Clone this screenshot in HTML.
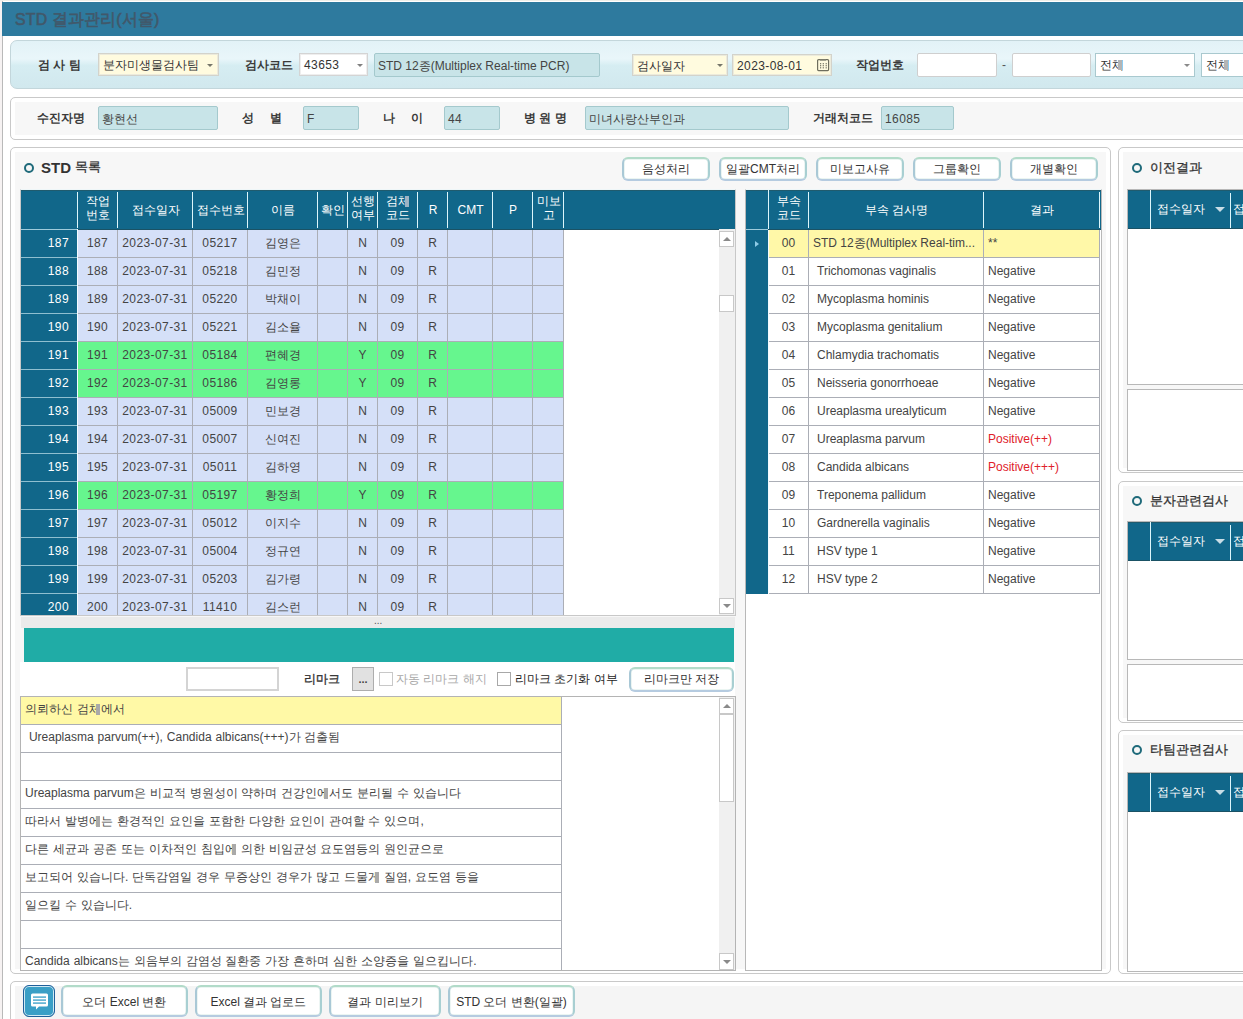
<!DOCTYPE html><html><head><meta charset="utf-8"><style>
*{margin:0;padding:0;box-sizing:border-box}
html,body{width:1243px;height:1019px;overflow:hidden;background:#fff}
body{position:relative;font-family:"Liberation Sans",sans-serif;font-size:12px;color:#444}
.a{position:absolute}
.t{position:absolute;white-space:nowrap;line-height:14px}
.hd{position:absolute;background:#11678a;border-top:1px solid #205b6e;border-bottom:1px solid #1a5265}
.hc{position:absolute;color:#fff;text-align:center;line-height:14px;white-space:nowrap}
.vl{position:absolute;width:1px;background:#dcf6fb}
.cell{position:absolute;text-align:center;white-space:nowrap;line-height:14px}
.btn{position:absolute;border-radius:6px;border:2px solid;border-color:#b2dbc9 #a8cfd2 #b5cbe0 #a9c8d6;background:#fff;text-align:center;color:#333;box-shadow:inset 0 0 0 0.5px #d8ebe6}
.lbl{position:absolute;font-weight:bold;color:#3a3a3a;white-space:nowrap;line-height:14px}
.fld{position:absolute;background:#c8e4e8;border:1px solid #a4c9cd;border-radius:2px;color:#444;line-height:21px;padding-top:1.5px;padding-left:3px;white-space:nowrap}
.cmb{position:absolute;background:#fffbdf;border:1px solid #d3d3cb;box-shadow:inset 0 0 0 1px #ecebdc;color:#333;line-height:21px;padding-top:1px;padding-left:4px;white-space:nowrap}
.arr{position:absolute;width:0;height:0;border-left:4px solid transparent;border-right:4px solid transparent;border-top:4px solid #888}
.e{position:relative}
.e::after{content:'';position:absolute;left:7px;top:2px;width:4px;height:11px;background:#a9a9a9}
.eh::after{background:#9fb4c4}
.panel{position:absolute;border:1px solid #c9c9c9;border-radius:5px;background:#f7f7f7;box-shadow:inset 0 0 0 4px #fff}
.circ{position:absolute;width:10px;height:10px;border:2.8px solid #1f6a7a;border-radius:50%}
.ptitle{position:absolute;font-weight:normal;-webkit-text-stroke:0.3px #333;font-size:13px;color:#333;white-space:nowrap;line-height:16px}
</style></head><body>
<div class="a" style="left:0;top:0;width:1243px;height:1019px;background:#f6f2f2"></div>
<div class="a" style="left:2px;top:0;width:1241px;height:1019px;background:#fff;border-left:1px solid #b9b9b9"></div>
<div class="a" style="left:0;top:0;width:1243px;height:1px;background:#eeeee8"></div>
<div class="a" style="left:2px;top:2px;width:1241px;height:34px;background:#2e7a9e"></div>
<div class="t" style="left:15px;top:11px;font-size:17px;line-height:18px;font-weight:normal;-webkit-text-stroke:0.6px #41586a;color:#41586a;letter-spacing:0.2px;transform:scaleX(0.935);transform-origin:0 0">STD 결과관리(서울)</div>
<div class="a" style="left:10px;top:40px;width:1300px;height:49px;border:1px solid #c3d6db;border-radius:7px;background:linear-gradient(#e2f2f7 0%,#e9f6fa 38%,#d6edf2 52%,#d1e8ee 100%)"></div>
<div class="lbl" style="left:38px;top:58px">검 사 팀</div>
<div class="cmb" style="left:98px;top:53px;width:121px;height:23px">분자미생물검사팀</div><div class="arr" style="left:207px;top:64px;border-width:3px 3px 0 3px;border-top-color:#76766a"></div>
<div class="lbl" style="left:245px;top:58px">검사코드</div>
<div class="cmb" style="left:299px;top:53px;width:69px;height:23px;background:#fff;border-color:#d4d4d4;box-shadow:inset 0 0 0 1px #eee;letter-spacing:0.4px">43653</div><div class="arr" style="left:357px;top:64px;border-width:3px 3px 0 3px;border-top-color:#808080"></div>
<div class="fld" style="left:374px;top:53px;width:226px;height:24px">STD 12종(Multiplex Real-time PCR)</div>
<div class="cmb" style="left:632px;top:54px;width:96px;height:22px">검사일자</div><div class="arr" style="left:717px;top:64px;border-width:3px 3px 0 3px;border-top-color:#76766a"></div>
<div class="cmb" style="left:732px;top:54px;width:100px;height:22px;letter-spacing:0.4px">2023-08-01</div>
<svg class="a" style="left:817px;top:59px" width="13" height="13" viewBox="0 0 13 13"><rect x="0.6" y="0.6" width="11" height="11" rx="1" fill="none" stroke="#6e6e5e" stroke-width="1.2"/><rect x="3" y="0.5" width="6" height="1.2" fill="#8a8a7a"/><rect x="3.0" y="4.1" width="1.2" height="1.2" fill="#707060"/><rect x="3.0" y="6.1" width="1.2" height="1.2" fill="#707060"/><rect x="3.0" y="8.2" width="1.2" height="1.2" fill="#707060"/><rect x="5.7" y="4.1" width="1.2" height="1.2" fill="#707060"/><rect x="5.7" y="6.1" width="1.2" height="1.2" fill="#707060"/><rect x="5.7" y="8.2" width="1.2" height="1.2" fill="#707060"/><rect x="8.6" y="4.1" width="1.2" height="1.2" fill="#707060"/><rect x="8.6" y="6.1" width="1.2" height="1.2" fill="#707060"/><rect x="8.6" y="8.2" width="1.2" height="1.2" fill="#707060"/></svg>
<div class="lbl" style="left:856px;top:58px">작업번호</div>
<div class="a" style="left:917px;top:53px;width:80px;height:24px;background:#fff;border:1px solid #cfcfcf;border-radius:2px"></div>
<div class="t" style="left:1002px;top:58px;color:#555">-</div>
<div class="a" style="left:1012px;top:53px;width:79px;height:24px;background:#fff;border:1px solid #cfcfcf;border-radius:2px"></div>
<div class="cmb" style="left:1095px;top:53px;width:100px;height:24px;background:#fff;border-color:#a9c9cf;box-shadow:none">전체</div><div class="arr" style="left:1184px;top:64px;border-width:3px 3px 0 3px;border-top-color:#8a8a8a"></div>
<div class="cmb" style="left:1201px;top:53px;width:100px;height:24px;background:#fff;border-color:#a9c9cf;box-shadow:none">전체</div>
<div class="a" style="left:1118px;top:60px;width:4px;height:10px;background:#b4b4b4"></div>
<div class="a" style="left:1224px;top:60px;width:4px;height:10px;background:#b4b4b4"></div>
<div class="panel" style="left:10px;top:97px;width:1300px;height:43px"></div>
<div class="lbl" style="left:37px;top:111px">수진자명</div>
<div class="fld" style="left:98px;top:106px;width:120px;height:24px">황현선</div>
<div class="lbl" style="left:242px;top:111px">성</div><div class="lbl" style="left:270px;top:111px">별</div>
<div class="fld" style="left:303px;top:106px;width:56px;height:24px">F</div>
<div class="lbl" style="left:383px;top:111px">나</div><div class="lbl" style="left:411px;top:111px">이</div>
<div class="fld" style="left:444px;top:106px;width:56px;height:24px;letter-spacing:0.4px">44</div>
<div class="lbl" style="left:524px;top:111px">병 원 명</div>
<div class="fld" style="left:585px;top:106px;width:204px;height:24px">미녀사랑산부인과</div>
<div class="lbl" style="left:813px;top:111px">거래처코드</div>
<div class="fld" style="left:881px;top:106px;width:73px;height:24px;letter-spacing:0.4px">16085</div>
<div class="panel" style="left:10px;top:147px;width:1101px;height:827px"></div>
<div class="circ" style="left:24px;top:163px"></div>
<div class="ptitle" style="left:41px;top:160px;font-size:15px;font-weight:bold;-webkit-text-stroke:0">STD</div><div class="ptitle" style="left:75px;top:159px">목록</div>
<div class="btn" style="left:622px;top:157px;width:88px;height:24px;line-height:20px">음성처리</div>
<div class="btn" style="left:719px;top:157px;width:88px;height:24px;line-height:20px">일괄CMT처리</div>
<div class="btn" style="left:816px;top:157px;width:88px;height:24px;line-height:20px">미보고사유</div>
<div class="btn" style="left:913px;top:157px;width:88px;height:24px;line-height:20px">그룹확인</div>
<div class="btn" style="left:1010px;top:157px;width:88px;height:24px;line-height:20px">개별확인</div>
<div class="a" style="left:20px;top:189px;width:716px;height:427px;background:#fff;border:1px solid #c8c8c8;border-top-color:#eef6f8"></div>
<div class="hd" style="left:21px;top:190px;width:714px;height:40px"></div>
<div class="hc" style="left:78px;top:194px;width:40px">작업<br>번호</div>
<div class="hc" style="left:118px;top:203px;width:75px">접수일자</div>
<div class="hc" style="left:193px;top:203px;width:55px">접수번호</div>
<div class="hc" style="left:248px;top:203px;width:70px">이름</div>
<div class="hc" style="left:318px;top:203px;width:30px">확인</div>
<div class="hc" style="left:348px;top:194px;width:30px">선행<br>여부</div>
<div class="hc" style="left:378px;top:194px;width:40px">검<span class="e eh">체</span><br>코드</div>
<div class="hc" style="left:418px;top:203px;width:30px">R</div>
<div class="hc" style="left:448px;top:203px;width:45px">CMT</div>
<div class="hc" style="left:493px;top:203px;width:40px">P</div>
<div class="hc" style="left:533px;top:194px;width:31px">미보<br>고</div>
<div class="vl" style="left:77px;top:192px;height:36px"></div>
<div class="vl" style="left:117px;top:192px;height:36px"></div>
<div class="vl" style="left:192px;top:192px;height:36px"></div>
<div class="vl" style="left:247px;top:192px;height:36px"></div>
<div class="vl" style="left:317px;top:192px;height:36px"></div>
<div class="vl" style="left:347px;top:192px;height:36px"></div>
<div class="vl" style="left:377px;top:192px;height:36px"></div>
<div class="vl" style="left:417px;top:192px;height:36px"></div>
<div class="vl" style="left:447px;top:192px;height:36px"></div>
<div class="vl" style="left:492px;top:192px;height:36px"></div>
<div class="vl" style="left:532px;top:192px;height:36px"></div>
<div class="vl" style="left:563px;top:192px;height:36px"></div>
<div class="a" style="left:21px;top:229px;width:698px;height:386px;overflow:hidden;z-index:1">
<div class="a" style="left:0;top:0;width:56px;height:1px;background:#9fcbdb"></div>
<div class="a" style="left:56px;top:0;width:1px;height:386px;background:#f4fbff"></div>
<div class="a" style="left:0;top:1px;width:56px;height:28px;background:#11678a;border-bottom:1px solid #8fbfd0"></div>
<div class="t" style="left:0;top:7px;width:48px;text-align:right;color:#fff;letter-spacing:0.4px">187</div>
<div class="a" style="left:57px;top:1px;width:40px;height:28px;background:#d5e0f8;border-right:1px solid #abaeb6;border-bottom:1px solid #abaeb6"></div>
<div class="cell" style="left:57px;top:7px;width:39px;letter-spacing:0.4px;">187</div>
<div class="a" style="left:97px;top:1px;width:75px;height:28px;background:#d5e0f8;border-right:1px solid #abaeb6;border-bottom:1px solid #abaeb6"></div>
<div class="cell" style="left:97px;top:7px;width:74px;letter-spacing:0.4px;">2023-07-31</div>
<div class="a" style="left:172px;top:1px;width:55px;height:28px;background:#d5e0f8;border-right:1px solid #abaeb6;border-bottom:1px solid #abaeb6"></div>
<div class="cell" style="left:172px;top:7px;width:54px;letter-spacing:0.4px;">05217</div>
<div class="a" style="left:227px;top:1px;width:70px;height:28px;background:#d5e0f8;border-right:1px solid #abaeb6;border-bottom:1px solid #abaeb6"></div>
<div class="cell" style="left:227px;top:7px;width:69px;">김영은</div>
<div class="a" style="left:297px;top:1px;width:30px;height:28px;background:#d5e0f8;border-right:1px solid #abaeb6;border-bottom:1px solid #abaeb6"></div>
<div class="a" style="left:327px;top:1px;width:30px;height:28px;background:#d5e0f8;border-right:1px solid #abaeb6;border-bottom:1px solid #abaeb6"></div>
<div class="cell" style="left:327px;top:7px;width:29px;">N</div>
<div class="a" style="left:357px;top:1px;width:40px;height:28px;background:#d5e0f8;border-right:1px solid #abaeb6;border-bottom:1px solid #abaeb6"></div>
<div class="cell" style="left:357px;top:7px;width:39px;letter-spacing:0.4px;">09</div>
<div class="a" style="left:397px;top:1px;width:30px;height:28px;background:#d5e0f8;border-right:1px solid #abaeb6;border-bottom:1px solid #abaeb6"></div>
<div class="cell" style="left:397px;top:7px;width:29px;">R</div>
<div class="a" style="left:427px;top:1px;width:45px;height:28px;background:#d5e0f8;border-right:1px solid #abaeb6;border-bottom:1px solid #abaeb6"></div>
<div class="a" style="left:472px;top:1px;width:40px;height:28px;background:#d5e0f8;border-right:1px solid #abaeb6;border-bottom:1px solid #abaeb6"></div>
<div class="a" style="left:512px;top:1px;width:31px;height:28px;background:#d5e0f8;border-right:1px solid #abaeb6;border-bottom:1px solid #abaeb6"></div>
<div class="a" style="left:0;top:29px;width:56px;height:28px;background:#11678a;border-bottom:1px solid #8fbfd0"></div>
<div class="t" style="left:0;top:35px;width:48px;text-align:right;color:#fff;letter-spacing:0.4px">188</div>
<div class="a" style="left:57px;top:29px;width:40px;height:28px;background:#d5e0f8;border-right:1px solid #abaeb6;border-bottom:1px solid #abaeb6"></div>
<div class="cell" style="left:57px;top:35px;width:39px;letter-spacing:0.4px;">188</div>
<div class="a" style="left:97px;top:29px;width:75px;height:28px;background:#d5e0f8;border-right:1px solid #abaeb6;border-bottom:1px solid #abaeb6"></div>
<div class="cell" style="left:97px;top:35px;width:74px;letter-spacing:0.4px;">2023-07-31</div>
<div class="a" style="left:172px;top:29px;width:55px;height:28px;background:#d5e0f8;border-right:1px solid #abaeb6;border-bottom:1px solid #abaeb6"></div>
<div class="cell" style="left:172px;top:35px;width:54px;letter-spacing:0.4px;">05218</div>
<div class="a" style="left:227px;top:29px;width:70px;height:28px;background:#d5e0f8;border-right:1px solid #abaeb6;border-bottom:1px solid #abaeb6"></div>
<div class="cell" style="left:227px;top:35px;width:69px;">김민정</div>
<div class="a" style="left:297px;top:29px;width:30px;height:28px;background:#d5e0f8;border-right:1px solid #abaeb6;border-bottom:1px solid #abaeb6"></div>
<div class="a" style="left:327px;top:29px;width:30px;height:28px;background:#d5e0f8;border-right:1px solid #abaeb6;border-bottom:1px solid #abaeb6"></div>
<div class="cell" style="left:327px;top:35px;width:29px;">N</div>
<div class="a" style="left:357px;top:29px;width:40px;height:28px;background:#d5e0f8;border-right:1px solid #abaeb6;border-bottom:1px solid #abaeb6"></div>
<div class="cell" style="left:357px;top:35px;width:39px;letter-spacing:0.4px;">09</div>
<div class="a" style="left:397px;top:29px;width:30px;height:28px;background:#d5e0f8;border-right:1px solid #abaeb6;border-bottom:1px solid #abaeb6"></div>
<div class="cell" style="left:397px;top:35px;width:29px;">R</div>
<div class="a" style="left:427px;top:29px;width:45px;height:28px;background:#d5e0f8;border-right:1px solid #abaeb6;border-bottom:1px solid #abaeb6"></div>
<div class="a" style="left:472px;top:29px;width:40px;height:28px;background:#d5e0f8;border-right:1px solid #abaeb6;border-bottom:1px solid #abaeb6"></div>
<div class="a" style="left:512px;top:29px;width:31px;height:28px;background:#d5e0f8;border-right:1px solid #abaeb6;border-bottom:1px solid #abaeb6"></div>
<div class="a" style="left:0;top:57px;width:56px;height:28px;background:#11678a;border-bottom:1px solid #8fbfd0"></div>
<div class="t" style="left:0;top:63px;width:48px;text-align:right;color:#fff;letter-spacing:0.4px">189</div>
<div class="a" style="left:57px;top:57px;width:40px;height:28px;background:#d5e0f8;border-right:1px solid #abaeb6;border-bottom:1px solid #abaeb6"></div>
<div class="cell" style="left:57px;top:63px;width:39px;letter-spacing:0.4px;">189</div>
<div class="a" style="left:97px;top:57px;width:75px;height:28px;background:#d5e0f8;border-right:1px solid #abaeb6;border-bottom:1px solid #abaeb6"></div>
<div class="cell" style="left:97px;top:63px;width:74px;letter-spacing:0.4px;">2023-07-31</div>
<div class="a" style="left:172px;top:57px;width:55px;height:28px;background:#d5e0f8;border-right:1px solid #abaeb6;border-bottom:1px solid #abaeb6"></div>
<div class="cell" style="left:172px;top:63px;width:54px;letter-spacing:0.4px;">05220</div>
<div class="a" style="left:227px;top:57px;width:70px;height:28px;background:#d5e0f8;border-right:1px solid #abaeb6;border-bottom:1px solid #abaeb6"></div>
<div class="cell" style="left:227px;top:63px;width:69px;">박채이</div>
<div class="a" style="left:297px;top:57px;width:30px;height:28px;background:#d5e0f8;border-right:1px solid #abaeb6;border-bottom:1px solid #abaeb6"></div>
<div class="a" style="left:327px;top:57px;width:30px;height:28px;background:#d5e0f8;border-right:1px solid #abaeb6;border-bottom:1px solid #abaeb6"></div>
<div class="cell" style="left:327px;top:63px;width:29px;">N</div>
<div class="a" style="left:357px;top:57px;width:40px;height:28px;background:#d5e0f8;border-right:1px solid #abaeb6;border-bottom:1px solid #abaeb6"></div>
<div class="cell" style="left:357px;top:63px;width:39px;letter-spacing:0.4px;">09</div>
<div class="a" style="left:397px;top:57px;width:30px;height:28px;background:#d5e0f8;border-right:1px solid #abaeb6;border-bottom:1px solid #abaeb6"></div>
<div class="cell" style="left:397px;top:63px;width:29px;">R</div>
<div class="a" style="left:427px;top:57px;width:45px;height:28px;background:#d5e0f8;border-right:1px solid #abaeb6;border-bottom:1px solid #abaeb6"></div>
<div class="a" style="left:472px;top:57px;width:40px;height:28px;background:#d5e0f8;border-right:1px solid #abaeb6;border-bottom:1px solid #abaeb6"></div>
<div class="a" style="left:512px;top:57px;width:31px;height:28px;background:#d5e0f8;border-right:1px solid #abaeb6;border-bottom:1px solid #abaeb6"></div>
<div class="a" style="left:0;top:85px;width:56px;height:28px;background:#11678a;border-bottom:1px solid #8fbfd0"></div>
<div class="t" style="left:0;top:91px;width:48px;text-align:right;color:#fff;letter-spacing:0.4px">190</div>
<div class="a" style="left:57px;top:85px;width:40px;height:28px;background:#d5e0f8;border-right:1px solid #abaeb6;border-bottom:1px solid #abaeb6"></div>
<div class="cell" style="left:57px;top:91px;width:39px;letter-spacing:0.4px;">190</div>
<div class="a" style="left:97px;top:85px;width:75px;height:28px;background:#d5e0f8;border-right:1px solid #abaeb6;border-bottom:1px solid #abaeb6"></div>
<div class="cell" style="left:97px;top:91px;width:74px;letter-spacing:0.4px;">2023-07-31</div>
<div class="a" style="left:172px;top:85px;width:55px;height:28px;background:#d5e0f8;border-right:1px solid #abaeb6;border-bottom:1px solid #abaeb6"></div>
<div class="cell" style="left:172px;top:91px;width:54px;letter-spacing:0.4px;">05221</div>
<div class="a" style="left:227px;top:85px;width:70px;height:28px;background:#d5e0f8;border-right:1px solid #abaeb6;border-bottom:1px solid #abaeb6"></div>
<div class="cell" style="left:227px;top:91px;width:69px;">김소율</div>
<div class="a" style="left:297px;top:85px;width:30px;height:28px;background:#d5e0f8;border-right:1px solid #abaeb6;border-bottom:1px solid #abaeb6"></div>
<div class="a" style="left:327px;top:85px;width:30px;height:28px;background:#d5e0f8;border-right:1px solid #abaeb6;border-bottom:1px solid #abaeb6"></div>
<div class="cell" style="left:327px;top:91px;width:29px;">N</div>
<div class="a" style="left:357px;top:85px;width:40px;height:28px;background:#d5e0f8;border-right:1px solid #abaeb6;border-bottom:1px solid #abaeb6"></div>
<div class="cell" style="left:357px;top:91px;width:39px;letter-spacing:0.4px;">09</div>
<div class="a" style="left:397px;top:85px;width:30px;height:28px;background:#d5e0f8;border-right:1px solid #abaeb6;border-bottom:1px solid #abaeb6"></div>
<div class="cell" style="left:397px;top:91px;width:29px;">R</div>
<div class="a" style="left:427px;top:85px;width:45px;height:28px;background:#d5e0f8;border-right:1px solid #abaeb6;border-bottom:1px solid #abaeb6"></div>
<div class="a" style="left:472px;top:85px;width:40px;height:28px;background:#d5e0f8;border-right:1px solid #abaeb6;border-bottom:1px solid #abaeb6"></div>
<div class="a" style="left:512px;top:85px;width:31px;height:28px;background:#d5e0f8;border-right:1px solid #abaeb6;border-bottom:1px solid #abaeb6"></div>
<div class="a" style="left:0;top:113px;width:56px;height:28px;background:#11678a;border-bottom:1px solid #8fbfd0"></div>
<div class="t" style="left:0;top:119px;width:48px;text-align:right;color:#fff;letter-spacing:0.4px">191</div>
<div class="a" style="left:57px;top:113px;width:40px;height:28px;background:#66f68e;border-right:1px solid #abaeb6;border-bottom:1px solid #abaeb6"></div>
<div class="cell" style="left:57px;top:119px;width:39px;letter-spacing:0.4px;">191</div>
<div class="a" style="left:97px;top:113px;width:75px;height:28px;background:#66f68e;border-right:1px solid #abaeb6;border-bottom:1px solid #abaeb6"></div>
<div class="cell" style="left:97px;top:119px;width:74px;letter-spacing:0.4px;">2023-07-31</div>
<div class="a" style="left:172px;top:113px;width:55px;height:28px;background:#66f68e;border-right:1px solid #abaeb6;border-bottom:1px solid #abaeb6"></div>
<div class="cell" style="left:172px;top:119px;width:54px;letter-spacing:0.4px;">05184</div>
<div class="a" style="left:227px;top:113px;width:70px;height:28px;background:#66f68e;border-right:1px solid #abaeb6;border-bottom:1px solid #abaeb6"></div>
<div class="cell" style="left:227px;top:119px;width:69px;">편혜경</div>
<div class="a" style="left:297px;top:113px;width:30px;height:28px;background:#66f68e;border-right:1px solid #abaeb6;border-bottom:1px solid #abaeb6"></div>
<div class="a" style="left:327px;top:113px;width:30px;height:28px;background:#66f68e;border-right:1px solid #abaeb6;border-bottom:1px solid #abaeb6"></div>
<div class="cell" style="left:327px;top:119px;width:29px;">Y</div>
<div class="a" style="left:357px;top:113px;width:40px;height:28px;background:#66f68e;border-right:1px solid #abaeb6;border-bottom:1px solid #abaeb6"></div>
<div class="cell" style="left:357px;top:119px;width:39px;letter-spacing:0.4px;">09</div>
<div class="a" style="left:397px;top:113px;width:30px;height:28px;background:#66f68e;border-right:1px solid #abaeb6;border-bottom:1px solid #abaeb6"></div>
<div class="cell" style="left:397px;top:119px;width:29px;">R</div>
<div class="a" style="left:427px;top:113px;width:45px;height:28px;background:#66f68e;border-right:1px solid #abaeb6;border-bottom:1px solid #abaeb6"></div>
<div class="a" style="left:472px;top:113px;width:40px;height:28px;background:#66f68e;border-right:1px solid #abaeb6;border-bottom:1px solid #abaeb6"></div>
<div class="a" style="left:512px;top:113px;width:31px;height:28px;background:#66f68e;border-right:1px solid #abaeb6;border-bottom:1px solid #abaeb6"></div>
<div class="a" style="left:0;top:141px;width:56px;height:28px;background:#11678a;border-bottom:1px solid #8fbfd0"></div>
<div class="t" style="left:0;top:147px;width:48px;text-align:right;color:#fff;letter-spacing:0.4px">192</div>
<div class="a" style="left:57px;top:141px;width:40px;height:28px;background:#66f68e;border-right:1px solid #abaeb6;border-bottom:1px solid #abaeb6"></div>
<div class="cell" style="left:57px;top:147px;width:39px;letter-spacing:0.4px;">192</div>
<div class="a" style="left:97px;top:141px;width:75px;height:28px;background:#66f68e;border-right:1px solid #abaeb6;border-bottom:1px solid #abaeb6"></div>
<div class="cell" style="left:97px;top:147px;width:74px;letter-spacing:0.4px;">2023-07-31</div>
<div class="a" style="left:172px;top:141px;width:55px;height:28px;background:#66f68e;border-right:1px solid #abaeb6;border-bottom:1px solid #abaeb6"></div>
<div class="cell" style="left:172px;top:147px;width:54px;letter-spacing:0.4px;">05186</div>
<div class="a" style="left:227px;top:141px;width:70px;height:28px;background:#66f68e;border-right:1px solid #abaeb6;border-bottom:1px solid #abaeb6"></div>
<div class="cell" style="left:227px;top:147px;width:69px;">김영롱</div>
<div class="a" style="left:297px;top:141px;width:30px;height:28px;background:#66f68e;border-right:1px solid #abaeb6;border-bottom:1px solid #abaeb6"></div>
<div class="a" style="left:327px;top:141px;width:30px;height:28px;background:#66f68e;border-right:1px solid #abaeb6;border-bottom:1px solid #abaeb6"></div>
<div class="cell" style="left:327px;top:147px;width:29px;">Y</div>
<div class="a" style="left:357px;top:141px;width:40px;height:28px;background:#66f68e;border-right:1px solid #abaeb6;border-bottom:1px solid #abaeb6"></div>
<div class="cell" style="left:357px;top:147px;width:39px;letter-spacing:0.4px;">09</div>
<div class="a" style="left:397px;top:141px;width:30px;height:28px;background:#66f68e;border-right:1px solid #abaeb6;border-bottom:1px solid #abaeb6"></div>
<div class="cell" style="left:397px;top:147px;width:29px;">R</div>
<div class="a" style="left:427px;top:141px;width:45px;height:28px;background:#66f68e;border-right:1px solid #abaeb6;border-bottom:1px solid #abaeb6"></div>
<div class="a" style="left:472px;top:141px;width:40px;height:28px;background:#66f68e;border-right:1px solid #abaeb6;border-bottom:1px solid #abaeb6"></div>
<div class="a" style="left:512px;top:141px;width:31px;height:28px;background:#66f68e;border-right:1px solid #abaeb6;border-bottom:1px solid #abaeb6"></div>
<div class="a" style="left:0;top:169px;width:56px;height:28px;background:#11678a;border-bottom:1px solid #8fbfd0"></div>
<div class="t" style="left:0;top:175px;width:48px;text-align:right;color:#fff;letter-spacing:0.4px">193</div>
<div class="a" style="left:57px;top:169px;width:40px;height:28px;background:#d5e0f8;border-right:1px solid #abaeb6;border-bottom:1px solid #abaeb6"></div>
<div class="cell" style="left:57px;top:175px;width:39px;letter-spacing:0.4px;">193</div>
<div class="a" style="left:97px;top:169px;width:75px;height:28px;background:#d5e0f8;border-right:1px solid #abaeb6;border-bottom:1px solid #abaeb6"></div>
<div class="cell" style="left:97px;top:175px;width:74px;letter-spacing:0.4px;">2023-07-31</div>
<div class="a" style="left:172px;top:169px;width:55px;height:28px;background:#d5e0f8;border-right:1px solid #abaeb6;border-bottom:1px solid #abaeb6"></div>
<div class="cell" style="left:172px;top:175px;width:54px;letter-spacing:0.4px;">05009</div>
<div class="a" style="left:227px;top:169px;width:70px;height:28px;background:#d5e0f8;border-right:1px solid #abaeb6;border-bottom:1px solid #abaeb6"></div>
<div class="cell" style="left:227px;top:175px;width:69px;">민보경</div>
<div class="a" style="left:297px;top:169px;width:30px;height:28px;background:#d5e0f8;border-right:1px solid #abaeb6;border-bottom:1px solid #abaeb6"></div>
<div class="a" style="left:327px;top:169px;width:30px;height:28px;background:#d5e0f8;border-right:1px solid #abaeb6;border-bottom:1px solid #abaeb6"></div>
<div class="cell" style="left:327px;top:175px;width:29px;">N</div>
<div class="a" style="left:357px;top:169px;width:40px;height:28px;background:#d5e0f8;border-right:1px solid #abaeb6;border-bottom:1px solid #abaeb6"></div>
<div class="cell" style="left:357px;top:175px;width:39px;letter-spacing:0.4px;">09</div>
<div class="a" style="left:397px;top:169px;width:30px;height:28px;background:#d5e0f8;border-right:1px solid #abaeb6;border-bottom:1px solid #abaeb6"></div>
<div class="cell" style="left:397px;top:175px;width:29px;">R</div>
<div class="a" style="left:427px;top:169px;width:45px;height:28px;background:#d5e0f8;border-right:1px solid #abaeb6;border-bottom:1px solid #abaeb6"></div>
<div class="a" style="left:472px;top:169px;width:40px;height:28px;background:#d5e0f8;border-right:1px solid #abaeb6;border-bottom:1px solid #abaeb6"></div>
<div class="a" style="left:512px;top:169px;width:31px;height:28px;background:#d5e0f8;border-right:1px solid #abaeb6;border-bottom:1px solid #abaeb6"></div>
<div class="a" style="left:0;top:197px;width:56px;height:28px;background:#11678a;border-bottom:1px solid #8fbfd0"></div>
<div class="t" style="left:0;top:203px;width:48px;text-align:right;color:#fff;letter-spacing:0.4px">194</div>
<div class="a" style="left:57px;top:197px;width:40px;height:28px;background:#d5e0f8;border-right:1px solid #abaeb6;border-bottom:1px solid #abaeb6"></div>
<div class="cell" style="left:57px;top:203px;width:39px;letter-spacing:0.4px;">194</div>
<div class="a" style="left:97px;top:197px;width:75px;height:28px;background:#d5e0f8;border-right:1px solid #abaeb6;border-bottom:1px solid #abaeb6"></div>
<div class="cell" style="left:97px;top:203px;width:74px;letter-spacing:0.4px;">2023-07-31</div>
<div class="a" style="left:172px;top:197px;width:55px;height:28px;background:#d5e0f8;border-right:1px solid #abaeb6;border-bottom:1px solid #abaeb6"></div>
<div class="cell" style="left:172px;top:203px;width:54px;letter-spacing:0.4px;">05007</div>
<div class="a" style="left:227px;top:197px;width:70px;height:28px;background:#d5e0f8;border-right:1px solid #abaeb6;border-bottom:1px solid #abaeb6"></div>
<div class="cell" style="left:227px;top:203px;width:69px;">신여진</div>
<div class="a" style="left:297px;top:197px;width:30px;height:28px;background:#d5e0f8;border-right:1px solid #abaeb6;border-bottom:1px solid #abaeb6"></div>
<div class="a" style="left:327px;top:197px;width:30px;height:28px;background:#d5e0f8;border-right:1px solid #abaeb6;border-bottom:1px solid #abaeb6"></div>
<div class="cell" style="left:327px;top:203px;width:29px;">N</div>
<div class="a" style="left:357px;top:197px;width:40px;height:28px;background:#d5e0f8;border-right:1px solid #abaeb6;border-bottom:1px solid #abaeb6"></div>
<div class="cell" style="left:357px;top:203px;width:39px;letter-spacing:0.4px;">09</div>
<div class="a" style="left:397px;top:197px;width:30px;height:28px;background:#d5e0f8;border-right:1px solid #abaeb6;border-bottom:1px solid #abaeb6"></div>
<div class="cell" style="left:397px;top:203px;width:29px;">R</div>
<div class="a" style="left:427px;top:197px;width:45px;height:28px;background:#d5e0f8;border-right:1px solid #abaeb6;border-bottom:1px solid #abaeb6"></div>
<div class="a" style="left:472px;top:197px;width:40px;height:28px;background:#d5e0f8;border-right:1px solid #abaeb6;border-bottom:1px solid #abaeb6"></div>
<div class="a" style="left:512px;top:197px;width:31px;height:28px;background:#d5e0f8;border-right:1px solid #abaeb6;border-bottom:1px solid #abaeb6"></div>
<div class="a" style="left:0;top:225px;width:56px;height:28px;background:#11678a;border-bottom:1px solid #8fbfd0"></div>
<div class="t" style="left:0;top:231px;width:48px;text-align:right;color:#fff;letter-spacing:0.4px">195</div>
<div class="a" style="left:57px;top:225px;width:40px;height:28px;background:#d5e0f8;border-right:1px solid #abaeb6;border-bottom:1px solid #abaeb6"></div>
<div class="cell" style="left:57px;top:231px;width:39px;letter-spacing:0.4px;">195</div>
<div class="a" style="left:97px;top:225px;width:75px;height:28px;background:#d5e0f8;border-right:1px solid #abaeb6;border-bottom:1px solid #abaeb6"></div>
<div class="cell" style="left:97px;top:231px;width:74px;letter-spacing:0.4px;">2023-07-31</div>
<div class="a" style="left:172px;top:225px;width:55px;height:28px;background:#d5e0f8;border-right:1px solid #abaeb6;border-bottom:1px solid #abaeb6"></div>
<div class="cell" style="left:172px;top:231px;width:54px;letter-spacing:0.4px;">05011</div>
<div class="a" style="left:227px;top:225px;width:70px;height:28px;background:#d5e0f8;border-right:1px solid #abaeb6;border-bottom:1px solid #abaeb6"></div>
<div class="cell" style="left:227px;top:231px;width:69px;">김하영</div>
<div class="a" style="left:297px;top:225px;width:30px;height:28px;background:#d5e0f8;border-right:1px solid #abaeb6;border-bottom:1px solid #abaeb6"></div>
<div class="a" style="left:327px;top:225px;width:30px;height:28px;background:#d5e0f8;border-right:1px solid #abaeb6;border-bottom:1px solid #abaeb6"></div>
<div class="cell" style="left:327px;top:231px;width:29px;">N</div>
<div class="a" style="left:357px;top:225px;width:40px;height:28px;background:#d5e0f8;border-right:1px solid #abaeb6;border-bottom:1px solid #abaeb6"></div>
<div class="cell" style="left:357px;top:231px;width:39px;letter-spacing:0.4px;">09</div>
<div class="a" style="left:397px;top:225px;width:30px;height:28px;background:#d5e0f8;border-right:1px solid #abaeb6;border-bottom:1px solid #abaeb6"></div>
<div class="cell" style="left:397px;top:231px;width:29px;">R</div>
<div class="a" style="left:427px;top:225px;width:45px;height:28px;background:#d5e0f8;border-right:1px solid #abaeb6;border-bottom:1px solid #abaeb6"></div>
<div class="a" style="left:472px;top:225px;width:40px;height:28px;background:#d5e0f8;border-right:1px solid #abaeb6;border-bottom:1px solid #abaeb6"></div>
<div class="a" style="left:512px;top:225px;width:31px;height:28px;background:#d5e0f8;border-right:1px solid #abaeb6;border-bottom:1px solid #abaeb6"></div>
<div class="a" style="left:0;top:253px;width:56px;height:28px;background:#11678a;border-bottom:1px solid #8fbfd0"></div>
<div class="t" style="left:0;top:259px;width:48px;text-align:right;color:#fff;letter-spacing:0.4px">196</div>
<div class="a" style="left:57px;top:253px;width:40px;height:28px;background:#66f68e;border-right:1px solid #abaeb6;border-bottom:1px solid #abaeb6"></div>
<div class="cell" style="left:57px;top:259px;width:39px;letter-spacing:0.4px;">196</div>
<div class="a" style="left:97px;top:253px;width:75px;height:28px;background:#66f68e;border-right:1px solid #abaeb6;border-bottom:1px solid #abaeb6"></div>
<div class="cell" style="left:97px;top:259px;width:74px;letter-spacing:0.4px;">2023-07-31</div>
<div class="a" style="left:172px;top:253px;width:55px;height:28px;background:#66f68e;border-right:1px solid #abaeb6;border-bottom:1px solid #abaeb6"></div>
<div class="cell" style="left:172px;top:259px;width:54px;letter-spacing:0.4px;">05197</div>
<div class="a" style="left:227px;top:253px;width:70px;height:28px;background:#66f68e;border-right:1px solid #abaeb6;border-bottom:1px solid #abaeb6"></div>
<div class="cell" style="left:227px;top:259px;width:69px;">황정희</div>
<div class="a" style="left:297px;top:253px;width:30px;height:28px;background:#66f68e;border-right:1px solid #abaeb6;border-bottom:1px solid #abaeb6"></div>
<div class="a" style="left:327px;top:253px;width:30px;height:28px;background:#66f68e;border-right:1px solid #abaeb6;border-bottom:1px solid #abaeb6"></div>
<div class="cell" style="left:327px;top:259px;width:29px;">Y</div>
<div class="a" style="left:357px;top:253px;width:40px;height:28px;background:#66f68e;border-right:1px solid #abaeb6;border-bottom:1px solid #abaeb6"></div>
<div class="cell" style="left:357px;top:259px;width:39px;letter-spacing:0.4px;">09</div>
<div class="a" style="left:397px;top:253px;width:30px;height:28px;background:#66f68e;border-right:1px solid #abaeb6;border-bottom:1px solid #abaeb6"></div>
<div class="cell" style="left:397px;top:259px;width:29px;">R</div>
<div class="a" style="left:427px;top:253px;width:45px;height:28px;background:#66f68e;border-right:1px solid #abaeb6;border-bottom:1px solid #abaeb6"></div>
<div class="a" style="left:472px;top:253px;width:40px;height:28px;background:#66f68e;border-right:1px solid #abaeb6;border-bottom:1px solid #abaeb6"></div>
<div class="a" style="left:512px;top:253px;width:31px;height:28px;background:#66f68e;border-right:1px solid #abaeb6;border-bottom:1px solid #abaeb6"></div>
<div class="a" style="left:0;top:281px;width:56px;height:28px;background:#11678a;border-bottom:1px solid #8fbfd0"></div>
<div class="t" style="left:0;top:287px;width:48px;text-align:right;color:#fff;letter-spacing:0.4px">197</div>
<div class="a" style="left:57px;top:281px;width:40px;height:28px;background:#d5e0f8;border-right:1px solid #abaeb6;border-bottom:1px solid #abaeb6"></div>
<div class="cell" style="left:57px;top:287px;width:39px;letter-spacing:0.4px;">197</div>
<div class="a" style="left:97px;top:281px;width:75px;height:28px;background:#d5e0f8;border-right:1px solid #abaeb6;border-bottom:1px solid #abaeb6"></div>
<div class="cell" style="left:97px;top:287px;width:74px;letter-spacing:0.4px;">2023-07-31</div>
<div class="a" style="left:172px;top:281px;width:55px;height:28px;background:#d5e0f8;border-right:1px solid #abaeb6;border-bottom:1px solid #abaeb6"></div>
<div class="cell" style="left:172px;top:287px;width:54px;letter-spacing:0.4px;">05012</div>
<div class="a" style="left:227px;top:281px;width:70px;height:28px;background:#d5e0f8;border-right:1px solid #abaeb6;border-bottom:1px solid #abaeb6"></div>
<div class="cell" style="left:227px;top:287px;width:69px;">이지수</div>
<div class="a" style="left:297px;top:281px;width:30px;height:28px;background:#d5e0f8;border-right:1px solid #abaeb6;border-bottom:1px solid #abaeb6"></div>
<div class="a" style="left:327px;top:281px;width:30px;height:28px;background:#d5e0f8;border-right:1px solid #abaeb6;border-bottom:1px solid #abaeb6"></div>
<div class="cell" style="left:327px;top:287px;width:29px;">N</div>
<div class="a" style="left:357px;top:281px;width:40px;height:28px;background:#d5e0f8;border-right:1px solid #abaeb6;border-bottom:1px solid #abaeb6"></div>
<div class="cell" style="left:357px;top:287px;width:39px;letter-spacing:0.4px;">09</div>
<div class="a" style="left:397px;top:281px;width:30px;height:28px;background:#d5e0f8;border-right:1px solid #abaeb6;border-bottom:1px solid #abaeb6"></div>
<div class="cell" style="left:397px;top:287px;width:29px;">R</div>
<div class="a" style="left:427px;top:281px;width:45px;height:28px;background:#d5e0f8;border-right:1px solid #abaeb6;border-bottom:1px solid #abaeb6"></div>
<div class="a" style="left:472px;top:281px;width:40px;height:28px;background:#d5e0f8;border-right:1px solid #abaeb6;border-bottom:1px solid #abaeb6"></div>
<div class="a" style="left:512px;top:281px;width:31px;height:28px;background:#d5e0f8;border-right:1px solid #abaeb6;border-bottom:1px solid #abaeb6"></div>
<div class="a" style="left:0;top:309px;width:56px;height:28px;background:#11678a;border-bottom:1px solid #8fbfd0"></div>
<div class="t" style="left:0;top:315px;width:48px;text-align:right;color:#fff;letter-spacing:0.4px">198</div>
<div class="a" style="left:57px;top:309px;width:40px;height:28px;background:#d5e0f8;border-right:1px solid #abaeb6;border-bottom:1px solid #abaeb6"></div>
<div class="cell" style="left:57px;top:315px;width:39px;letter-spacing:0.4px;">198</div>
<div class="a" style="left:97px;top:309px;width:75px;height:28px;background:#d5e0f8;border-right:1px solid #abaeb6;border-bottom:1px solid #abaeb6"></div>
<div class="cell" style="left:97px;top:315px;width:74px;letter-spacing:0.4px;">2023-07-31</div>
<div class="a" style="left:172px;top:309px;width:55px;height:28px;background:#d5e0f8;border-right:1px solid #abaeb6;border-bottom:1px solid #abaeb6"></div>
<div class="cell" style="left:172px;top:315px;width:54px;letter-spacing:0.4px;">05004</div>
<div class="a" style="left:227px;top:309px;width:70px;height:28px;background:#d5e0f8;border-right:1px solid #abaeb6;border-bottom:1px solid #abaeb6"></div>
<div class="cell" style="left:227px;top:315px;width:69px;">정규연</div>
<div class="a" style="left:297px;top:309px;width:30px;height:28px;background:#d5e0f8;border-right:1px solid #abaeb6;border-bottom:1px solid #abaeb6"></div>
<div class="a" style="left:327px;top:309px;width:30px;height:28px;background:#d5e0f8;border-right:1px solid #abaeb6;border-bottom:1px solid #abaeb6"></div>
<div class="cell" style="left:327px;top:315px;width:29px;">N</div>
<div class="a" style="left:357px;top:309px;width:40px;height:28px;background:#d5e0f8;border-right:1px solid #abaeb6;border-bottom:1px solid #abaeb6"></div>
<div class="cell" style="left:357px;top:315px;width:39px;letter-spacing:0.4px;">09</div>
<div class="a" style="left:397px;top:309px;width:30px;height:28px;background:#d5e0f8;border-right:1px solid #abaeb6;border-bottom:1px solid #abaeb6"></div>
<div class="cell" style="left:397px;top:315px;width:29px;">R</div>
<div class="a" style="left:427px;top:309px;width:45px;height:28px;background:#d5e0f8;border-right:1px solid #abaeb6;border-bottom:1px solid #abaeb6"></div>
<div class="a" style="left:472px;top:309px;width:40px;height:28px;background:#d5e0f8;border-right:1px solid #abaeb6;border-bottom:1px solid #abaeb6"></div>
<div class="a" style="left:512px;top:309px;width:31px;height:28px;background:#d5e0f8;border-right:1px solid #abaeb6;border-bottom:1px solid #abaeb6"></div>
<div class="a" style="left:0;top:337px;width:56px;height:28px;background:#11678a;border-bottom:1px solid #8fbfd0"></div>
<div class="t" style="left:0;top:343px;width:48px;text-align:right;color:#fff;letter-spacing:0.4px">199</div>
<div class="a" style="left:57px;top:337px;width:40px;height:28px;background:#d5e0f8;border-right:1px solid #abaeb6;border-bottom:1px solid #abaeb6"></div>
<div class="cell" style="left:57px;top:343px;width:39px;letter-spacing:0.4px;">199</div>
<div class="a" style="left:97px;top:337px;width:75px;height:28px;background:#d5e0f8;border-right:1px solid #abaeb6;border-bottom:1px solid #abaeb6"></div>
<div class="cell" style="left:97px;top:343px;width:74px;letter-spacing:0.4px;">2023-07-31</div>
<div class="a" style="left:172px;top:337px;width:55px;height:28px;background:#d5e0f8;border-right:1px solid #abaeb6;border-bottom:1px solid #abaeb6"></div>
<div class="cell" style="left:172px;top:343px;width:54px;letter-spacing:0.4px;">05203</div>
<div class="a" style="left:227px;top:337px;width:70px;height:28px;background:#d5e0f8;border-right:1px solid #abaeb6;border-bottom:1px solid #abaeb6"></div>
<div class="cell" style="left:227px;top:343px;width:69px;">김가령</div>
<div class="a" style="left:297px;top:337px;width:30px;height:28px;background:#d5e0f8;border-right:1px solid #abaeb6;border-bottom:1px solid #abaeb6"></div>
<div class="a" style="left:327px;top:337px;width:30px;height:28px;background:#d5e0f8;border-right:1px solid #abaeb6;border-bottom:1px solid #abaeb6"></div>
<div class="cell" style="left:327px;top:343px;width:29px;">N</div>
<div class="a" style="left:357px;top:337px;width:40px;height:28px;background:#d5e0f8;border-right:1px solid #abaeb6;border-bottom:1px solid #abaeb6"></div>
<div class="cell" style="left:357px;top:343px;width:39px;letter-spacing:0.4px;">09</div>
<div class="a" style="left:397px;top:337px;width:30px;height:28px;background:#d5e0f8;border-right:1px solid #abaeb6;border-bottom:1px solid #abaeb6"></div>
<div class="cell" style="left:397px;top:343px;width:29px;">R</div>
<div class="a" style="left:427px;top:337px;width:45px;height:28px;background:#d5e0f8;border-right:1px solid #abaeb6;border-bottom:1px solid #abaeb6"></div>
<div class="a" style="left:472px;top:337px;width:40px;height:28px;background:#d5e0f8;border-right:1px solid #abaeb6;border-bottom:1px solid #abaeb6"></div>
<div class="a" style="left:512px;top:337px;width:31px;height:28px;background:#d5e0f8;border-right:1px solid #abaeb6;border-bottom:1px solid #abaeb6"></div>
<div class="a" style="left:0;top:365px;width:56px;height:28px;background:#11678a;border-bottom:1px solid #8fbfd0"></div>
<div class="t" style="left:0;top:371px;width:48px;text-align:right;color:#fff;letter-spacing:0.4px">200</div>
<div class="a" style="left:57px;top:365px;width:40px;height:28px;background:#d5e0f8;border-right:1px solid #abaeb6;border-bottom:1px solid #abaeb6"></div>
<div class="cell" style="left:57px;top:371px;width:39px;letter-spacing:0.4px;">200</div>
<div class="a" style="left:97px;top:365px;width:75px;height:28px;background:#d5e0f8;border-right:1px solid #abaeb6;border-bottom:1px solid #abaeb6"></div>
<div class="cell" style="left:97px;top:371px;width:74px;letter-spacing:0.4px;">2023-07-31</div>
<div class="a" style="left:172px;top:365px;width:55px;height:28px;background:#d5e0f8;border-right:1px solid #abaeb6;border-bottom:1px solid #abaeb6"></div>
<div class="cell" style="left:172px;top:371px;width:54px;letter-spacing:0.4px;">11410</div>
<div class="a" style="left:227px;top:365px;width:70px;height:28px;background:#d5e0f8;border-right:1px solid #abaeb6;border-bottom:1px solid #abaeb6"></div>
<div class="cell" style="left:227px;top:371px;width:69px;">김스런</div>
<div class="a" style="left:297px;top:365px;width:30px;height:28px;background:#d5e0f8;border-right:1px solid #abaeb6;border-bottom:1px solid #abaeb6"></div>
<div class="a" style="left:327px;top:365px;width:30px;height:28px;background:#d5e0f8;border-right:1px solid #abaeb6;border-bottom:1px solid #abaeb6"></div>
<div class="cell" style="left:327px;top:371px;width:29px;">N</div>
<div class="a" style="left:357px;top:365px;width:40px;height:28px;background:#d5e0f8;border-right:1px solid #abaeb6;border-bottom:1px solid #abaeb6"></div>
<div class="cell" style="left:357px;top:371px;width:39px;letter-spacing:0.4px;">09</div>
<div class="a" style="left:397px;top:365px;width:30px;height:28px;background:#d5e0f8;border-right:1px solid #abaeb6;border-bottom:1px solid #abaeb6"></div>
<div class="cell" style="left:397px;top:371px;width:29px;">R</div>
<div class="a" style="left:427px;top:365px;width:45px;height:28px;background:#d5e0f8;border-right:1px solid #abaeb6;border-bottom:1px solid #abaeb6"></div>
<div class="a" style="left:472px;top:365px;width:40px;height:28px;background:#d5e0f8;border-right:1px solid #abaeb6;border-bottom:1px solid #abaeb6"></div>
<div class="a" style="left:512px;top:365px;width:31px;height:28px;background:#d5e0f8;border-right:1px solid #abaeb6;border-bottom:1px solid #abaeb6"></div>
</div>
<div class="a" style="left:719px;top:229px;width:16px;height:386px;background:#f0f0f0"></div>
<div class="a" style="left:719px;top:231px;width:15px;height:16px;background:#fff;border:1px solid #c8c8c8"></div>
<div class="arr" style="left:723px;top:237px;border-top:0;border-bottom:4px solid #8a8a8a"></div>
<div class="a" style="left:719px;top:295px;width:15px;height:17px;background:#fff;border:1px solid #c8c8c8"></div>
<div class="a" style="left:719px;top:598px;width:15px;height:16px;background:#fff;border:1px solid #c8c8c8"></div>
<div class="arr" style="left:723px;top:604px;border-top-color:#8a8a8a"></div>
<div class="a" style="left:21px;top:617px;width:714px;height:11px;background:#ebebeb"></div>
<div class="t" style="left:374px;top:614px;font-size:10px;color:#555">...</div>
<div class="a" style="left:24px;top:628px;width:710px;height:34px;background:#20aca6"></div>
<div class="a" style="left:20px;top:662px;width:715px;height:34px;background:#fff"></div>
<div class="a" style="left:186px;top:667px;width:93px;height:24px;background:#fff;border:2px solid #d4d4d4"></div>
<div class="lbl" style="left:304px;top:672px;font-weight:normal;-webkit-text-stroke:0.35px #333;color:#333">리마크</div>
<div class="a" style="left:352px;top:667px;width:22px;height:24px;background:#e1e1e1;border:1px solid #adadad;text-align:center;line-height:22px;font-weight:bold;font-size:11px">...</div>
<div class="a" style="left:379px;top:672px;width:14px;height:14px;border:1px solid #c8c8c8;background:#fff"></div>
<div class="t" style="left:396px;top:672px;color:#a8a8a8">자동 리마크 해지</div>
<div class="a" style="left:497px;top:672px;width:14px;height:14px;border:1px solid #a8a8a8;background:#fff"></div>
<div class="t" style="left:515px;top:672px;color:#222">리마크 초기화 여부</div>
<div class="btn" style="left:629px;top:667px;width:105px;height:25px;line-height:21px">리마크만 저장</div>
<div class="a" style="left:20px;top:696px;width:716px;height:275px;background:#fff;border:1px solid #b4b4b4"></div>
<div class="a" style="left:21px;top:697px;width:698px;height:273px;overflow:hidden">
<div class="a" style="left:0;top:0px;width:541px;height:28px;background:#fff9a6;border-right:1px solid #abaeb6;border-bottom:1px solid #abaeb6"></div>
<div class="t" style="left:4px;top:5px;word-spacing:0.6px">의뢰하신 검<span class="e">체</span>에서</div>
<div class="a" style="left:0;top:28px;width:541px;height:28px;background:#fff;border-right:1px solid #abaeb6;border-bottom:1px solid #abaeb6"></div>
<div class="t" style="left:4px;top:33px;word-spacing:0.6px">&nbsp;Ureaplasma parvum(++), Candida albicans(+++)가 검출됨</div>
<div class="a" style="left:0;top:56px;width:541px;height:28px;background:#fff;border-right:1px solid #abaeb6;border-bottom:1px solid #abaeb6"></div>
<div class="a" style="left:0;top:84px;width:541px;height:28px;background:#fff;border-right:1px solid #abaeb6;border-bottom:1px solid #abaeb6"></div>
<div class="t" style="left:4px;top:89px;word-spacing:0.6px">Ureaplasma parvum은 비교적 병원성이 약하며 건강인<span class="e">에</span>서도 분리될 수 있습니다</div>
<div class="a" style="left:0;top:112px;width:541px;height:28px;background:#fff;border-right:1px solid #abaeb6;border-bottom:1px solid #abaeb6"></div>
<div class="t" style="left:4px;top:117px;word-spacing:0.6px">따라서 발병<span class="e">에</span>는 환경적인 요인을 포함한 다양한 요인이 관여할 수 있으며,</div>
<div class="a" style="left:0;top:140px;width:541px;height:28px;background:#fff;border-right:1px solid #abaeb6;border-bottom:1px solid #abaeb6"></div>
<div class="t" style="left:4px;top:145px;word-spacing:0.6px">다른 세균과 공존 또는 이차적인 침입<span class="e">에</span> 의한 비임균성 요도염등의 원인균으로</div>
<div class="a" style="left:0;top:168px;width:541px;height:28px;background:#fff;border-right:1px solid #abaeb6;border-bottom:1px solid #abaeb6"></div>
<div class="t" style="left:4px;top:173px;word-spacing:0.6px">보고되어 있습니다. 단독감염일 경우 무증상인 경우가 많고 드물<span class="e">게</span> 질염, 요도염 등을</div>
<div class="a" style="left:0;top:196px;width:541px;height:28px;background:#fff;border-right:1px solid #abaeb6;border-bottom:1px solid #abaeb6"></div>
<div class="t" style="left:4px;top:201px;word-spacing:0.6px">일으킬 수 있습니다.</div>
<div class="a" style="left:0;top:224px;width:541px;height:28px;background:#fff;border-right:1px solid #abaeb6;border-bottom:1px solid #abaeb6"></div>
<div class="a" style="left:0;top:252px;width:541px;height:28px;background:#fff;border-right:1px solid #abaeb6;border-bottom:1px solid #abaeb6"></div>
<div class="t" style="left:4px;top:257px;word-spacing:0.6px">Candida albicans는 외음부의 감염성 질환중 가장 흔하며 심한 소양증을 일으킵니다.</div>
</div>
<div class="a" style="left:719px;top:697px;width:16px;height:273px;background:#f0f0f0"></div>
<div class="a" style="left:719px;top:698px;width:15px;height:16px;background:#fff;border:1px solid #c8c8c8"></div>
<div class="arr" style="left:723px;top:704px;border-top:0;border-bottom:4px solid #8a8a8a"></div>
<div class="a" style="left:719px;top:714px;width:15px;height:88px;background:#fff;border:1px solid #c8c8c8"></div>
<div class="a" style="left:719px;top:953px;width:15px;height:17px;background:#fff;border:1px solid #c8c8c8"></div>
<div class="arr" style="left:723px;top:960px;border-top-color:#8a8a8a"></div>
<div class="a" style="left:745px;top:189px;width:357px;height:782px;background:#fff;border:1px solid #b8b8b8;border-top-color:#eef6f8"></div>
<div class="hd" style="left:746px;top:190px;width:355px;height:40px"></div>
<div class="vl" style="left:768px;top:190px;height:39px"></div>
<div class="a" style="left:746px;top:229px;width:22px;height:1px;background:#9fcbdb"></div>
<div class="vl" style="left:808px;top:192px;height:36px"></div>
<div class="vl" style="left:983px;top:192px;height:36px"></div>
<div class="vl" style="left:1099px;top:192px;height:36px"></div>
<div class="hc" style="left:769px;top:194px;width:40px">부속<br>코드</div>
<div class="hc" style="left:809px;top:203px;width:175px">부속 검사명</div>
<div class="hc" style="left:984px;top:203px;width:116px">결과</div>
<div class="a" style="left:746px;top:230px;width:22px;height:364px;background:#11678a"></div>
<div class="a" style="left:768px;top:230px;width:1px;height:364px;background:#f4fbff"></div>
<div class="a" style="left:769px;top:230px;width:40px;height:28px;background:#fff8a8;border-right:1px solid #abaeb6;border-bottom:1px solid #abaeb6"></div>
<div class="a" style="left:809px;top:230px;width:175px;height:28px;background:#fff8a8;border-right:1px solid #abaeb6;border-bottom:1px solid #abaeb6"></div>
<div class="a" style="left:984px;top:230px;width:116px;height:28px;background:#fff8a8;border-right:1px solid #abaeb6;border-bottom:1px solid #abaeb6"></div>
<div class="cell" style="left:769px;top:236px;width:39px">00</div>
<div class="t" style="left:813px;top:236px">STD 12종(Multiplex Real-tim...</div>
<div class="t" style="left:988px;top:236px;color:#444">**</div>
<div class="a" style="left:769px;top:258px;width:40px;height:28px;background:#fff;border-right:1px solid #abaeb6;border-bottom:1px solid #abaeb6"></div>
<div class="a" style="left:809px;top:258px;width:175px;height:28px;background:#fff;border-right:1px solid #abaeb6;border-bottom:1px solid #abaeb6"></div>
<div class="a" style="left:984px;top:258px;width:116px;height:28px;background:#fff;border-right:1px solid #abaeb6;border-bottom:1px solid #abaeb6"></div>
<div class="cell" style="left:769px;top:264px;width:39px">01</div>
<div class="t" style="left:817px;top:264px">Trichomonas vaginalis</div>
<div class="t" style="left:988px;top:264px;color:#444">Negative</div>
<div class="a" style="left:769px;top:286px;width:40px;height:28px;background:#fff;border-right:1px solid #abaeb6;border-bottom:1px solid #abaeb6"></div>
<div class="a" style="left:809px;top:286px;width:175px;height:28px;background:#fff;border-right:1px solid #abaeb6;border-bottom:1px solid #abaeb6"></div>
<div class="a" style="left:984px;top:286px;width:116px;height:28px;background:#fff;border-right:1px solid #abaeb6;border-bottom:1px solid #abaeb6"></div>
<div class="cell" style="left:769px;top:292px;width:39px">02</div>
<div class="t" style="left:817px;top:292px">Mycoplasma hominis</div>
<div class="t" style="left:988px;top:292px;color:#444">Negative</div>
<div class="a" style="left:769px;top:314px;width:40px;height:28px;background:#fff;border-right:1px solid #abaeb6;border-bottom:1px solid #abaeb6"></div>
<div class="a" style="left:809px;top:314px;width:175px;height:28px;background:#fff;border-right:1px solid #abaeb6;border-bottom:1px solid #abaeb6"></div>
<div class="a" style="left:984px;top:314px;width:116px;height:28px;background:#fff;border-right:1px solid #abaeb6;border-bottom:1px solid #abaeb6"></div>
<div class="cell" style="left:769px;top:320px;width:39px">03</div>
<div class="t" style="left:817px;top:320px">Mycoplasma genitalium</div>
<div class="t" style="left:988px;top:320px;color:#444">Negative</div>
<div class="a" style="left:769px;top:342px;width:40px;height:28px;background:#fff;border-right:1px solid #abaeb6;border-bottom:1px solid #abaeb6"></div>
<div class="a" style="left:809px;top:342px;width:175px;height:28px;background:#fff;border-right:1px solid #abaeb6;border-bottom:1px solid #abaeb6"></div>
<div class="a" style="left:984px;top:342px;width:116px;height:28px;background:#fff;border-right:1px solid #abaeb6;border-bottom:1px solid #abaeb6"></div>
<div class="cell" style="left:769px;top:348px;width:39px">04</div>
<div class="t" style="left:817px;top:348px">Chlamydia trachomatis</div>
<div class="t" style="left:988px;top:348px;color:#444">Negative</div>
<div class="a" style="left:769px;top:370px;width:40px;height:28px;background:#fff;border-right:1px solid #abaeb6;border-bottom:1px solid #abaeb6"></div>
<div class="a" style="left:809px;top:370px;width:175px;height:28px;background:#fff;border-right:1px solid #abaeb6;border-bottom:1px solid #abaeb6"></div>
<div class="a" style="left:984px;top:370px;width:116px;height:28px;background:#fff;border-right:1px solid #abaeb6;border-bottom:1px solid #abaeb6"></div>
<div class="cell" style="left:769px;top:376px;width:39px">05</div>
<div class="t" style="left:817px;top:376px">Neisseria gonorrhoeae</div>
<div class="t" style="left:988px;top:376px;color:#444">Negative</div>
<div class="a" style="left:769px;top:398px;width:40px;height:28px;background:#fff;border-right:1px solid #abaeb6;border-bottom:1px solid #abaeb6"></div>
<div class="a" style="left:809px;top:398px;width:175px;height:28px;background:#fff;border-right:1px solid #abaeb6;border-bottom:1px solid #abaeb6"></div>
<div class="a" style="left:984px;top:398px;width:116px;height:28px;background:#fff;border-right:1px solid #abaeb6;border-bottom:1px solid #abaeb6"></div>
<div class="cell" style="left:769px;top:404px;width:39px">06</div>
<div class="t" style="left:817px;top:404px">Ureaplasma urealyticum</div>
<div class="t" style="left:988px;top:404px;color:#444">Negative</div>
<div class="a" style="left:769px;top:426px;width:40px;height:28px;background:#fff;border-right:1px solid #abaeb6;border-bottom:1px solid #abaeb6"></div>
<div class="a" style="left:809px;top:426px;width:175px;height:28px;background:#fff;border-right:1px solid #abaeb6;border-bottom:1px solid #abaeb6"></div>
<div class="a" style="left:984px;top:426px;width:116px;height:28px;background:#fff;border-right:1px solid #abaeb6;border-bottom:1px solid #abaeb6"></div>
<div class="cell" style="left:769px;top:432px;width:39px">07</div>
<div class="t" style="left:817px;top:432px">Ureaplasma parvum</div>
<div class="t" style="left:988px;top:432px;color:#e0202a">Positive(++)</div>
<div class="a" style="left:769px;top:454px;width:40px;height:28px;background:#fff;border-right:1px solid #abaeb6;border-bottom:1px solid #abaeb6"></div>
<div class="a" style="left:809px;top:454px;width:175px;height:28px;background:#fff;border-right:1px solid #abaeb6;border-bottom:1px solid #abaeb6"></div>
<div class="a" style="left:984px;top:454px;width:116px;height:28px;background:#fff;border-right:1px solid #abaeb6;border-bottom:1px solid #abaeb6"></div>
<div class="cell" style="left:769px;top:460px;width:39px">08</div>
<div class="t" style="left:817px;top:460px">Candida albicans</div>
<div class="t" style="left:988px;top:460px;color:#e0202a">Positive(+++)</div>
<div class="a" style="left:769px;top:482px;width:40px;height:28px;background:#fff;border-right:1px solid #abaeb6;border-bottom:1px solid #abaeb6"></div>
<div class="a" style="left:809px;top:482px;width:175px;height:28px;background:#fff;border-right:1px solid #abaeb6;border-bottom:1px solid #abaeb6"></div>
<div class="a" style="left:984px;top:482px;width:116px;height:28px;background:#fff;border-right:1px solid #abaeb6;border-bottom:1px solid #abaeb6"></div>
<div class="cell" style="left:769px;top:488px;width:39px">09</div>
<div class="t" style="left:817px;top:488px">Treponema pallidum</div>
<div class="t" style="left:988px;top:488px;color:#444">Negative</div>
<div class="a" style="left:769px;top:510px;width:40px;height:28px;background:#fff;border-right:1px solid #abaeb6;border-bottom:1px solid #abaeb6"></div>
<div class="a" style="left:809px;top:510px;width:175px;height:28px;background:#fff;border-right:1px solid #abaeb6;border-bottom:1px solid #abaeb6"></div>
<div class="a" style="left:984px;top:510px;width:116px;height:28px;background:#fff;border-right:1px solid #abaeb6;border-bottom:1px solid #abaeb6"></div>
<div class="cell" style="left:769px;top:516px;width:39px">10</div>
<div class="t" style="left:817px;top:516px">Gardnerella vaginalis</div>
<div class="t" style="left:988px;top:516px;color:#444">Negative</div>
<div class="a" style="left:769px;top:538px;width:40px;height:28px;background:#fff;border-right:1px solid #abaeb6;border-bottom:1px solid #abaeb6"></div>
<div class="a" style="left:809px;top:538px;width:175px;height:28px;background:#fff;border-right:1px solid #abaeb6;border-bottom:1px solid #abaeb6"></div>
<div class="a" style="left:984px;top:538px;width:116px;height:28px;background:#fff;border-right:1px solid #abaeb6;border-bottom:1px solid #abaeb6"></div>
<div class="cell" style="left:769px;top:544px;width:39px">11</div>
<div class="t" style="left:817px;top:544px">HSV type 1</div>
<div class="t" style="left:988px;top:544px;color:#444">Negative</div>
<div class="a" style="left:769px;top:566px;width:40px;height:28px;background:#fff;border-right:1px solid #abaeb6;border-bottom:1px solid #abaeb6"></div>
<div class="a" style="left:809px;top:566px;width:175px;height:28px;background:#fff;border-right:1px solid #abaeb6;border-bottom:1px solid #abaeb6"></div>
<div class="a" style="left:984px;top:566px;width:116px;height:28px;background:#fff;border-right:1px solid #abaeb6;border-bottom:1px solid #abaeb6"></div>
<div class="cell" style="left:769px;top:572px;width:39px">12</div>
<div class="t" style="left:817px;top:572px">HSV type 2</div>
<div class="t" style="left:988px;top:572px;color:#444">Negative</div>
<div class="a" style="left:755px;top:241px;width:0;height:0;border-top:3.5px solid transparent;border-bottom:3.5px solid transparent;border-left:4px solid #8fcbe6"></div>
<div class="panel" style="left:1118px;top:147px;width:200px;height:326px"></div>
<div class="circ" style="left:1132px;top:163px"></div>
<div class="ptitle" style="left:1150px;top:160px">이전결과</div>
<div class="a" style="left:1127px;top:189px;width:200px;height:196px;background:#fff;border:1px solid #b8b8b8"></div>
<div class="hd" style="left:1128px;top:190px;width:200px;height:39px"></div>
<div class="vl" style="left:1150px;top:190px;height:39px"></div>
<div class="vl" style="left:1230px;top:193px;height:35px"></div>
<div class="hc" style="left:1157px;top:202px">접수일자</div>
<div class="arr" style="left:1215px;top:207px;border-left-width:5px;border-right-width:5px;border-top:5px solid #c8dde6"></div>
<div class="hc" style="left:1233px;top:202px">접</div>
<div class="a" style="left:1127px;top:389px;width:200px;height:82px;background:#fff;border:1px solid #b8b8b8"></div>
<div class="panel" style="left:1118px;top:481px;width:200px;height:242px"></div>
<div class="circ" style="left:1132px;top:496px"></div>
<div class="ptitle" style="left:1150px;top:493px">분자관련검사</div>
<div class="a" style="left:1127px;top:521px;width:200px;height:139px;background:#fff;border:1px solid #b8b8b8"></div>
<div class="hd" style="left:1128px;top:522px;width:200px;height:39px"></div>
<div class="vl" style="left:1150px;top:522px;height:39px"></div>
<div class="vl" style="left:1230px;top:525px;height:35px"></div>
<div class="hc" style="left:1157px;top:534px">접수일자</div>
<div class="arr" style="left:1215px;top:539px;border-left-width:5px;border-right-width:5px;border-top:5px solid #c8dde6"></div>
<div class="hc" style="left:1233px;top:534px">접</div>
<div class="a" style="left:1127px;top:664px;width:200px;height:57px;background:#fff;border:1px solid #b8b8b8"></div>
<div class="panel" style="left:1118px;top:730px;width:200px;height:244px"></div>
<div class="circ" style="left:1132px;top:745px"></div>
<div class="ptitle" style="left:1150px;top:742px">타팀관련검사</div>
<div class="a" style="left:1127px;top:772px;width:200px;height:200px;background:#fff;border:1px solid #b8b8b8"></div>
<div class="hd" style="left:1128px;top:773px;width:200px;height:39px"></div>
<div class="vl" style="left:1150px;top:773px;height:39px"></div>
<div class="vl" style="left:1230px;top:776px;height:35px"></div>
<div class="hc" style="left:1157px;top:785px">접수일자</div>
<div class="arr" style="left:1215px;top:790px;border-left-width:5px;border-right-width:5px;border-top:5px solid #c8dde6"></div>
<div class="hc" style="left:1233px;top:785px">접</div>
<div class="panel" style="left:10px;top:981px;width:1300px;height:60px;background:#f5f5f5"></div>
<div class="a" style="left:23px;top:985px;width:32px;height:32px;border-radius:6px;background:#3a9fc6;border:1px solid #1f5f9a;box-shadow:inset 0 0 0 1px #cfeaf5"></div>
<svg class="a" style="left:30px;top:993px" width="20" height="17" viewBox="0 0 20 17"><path d="M2.5 0.5h14a1.5 1.5 0 0 1 1.5 1.5v10a1.5 1.5 0 0 1 -1.5 1.5h-7.5l-3 3v-3h-3.5a1.5 1.5 0 0 1 -1.5 -1.5v-10a1.5 1.5 0 0 1 1.5 -1.5z" fill="#fff"/><rect x="3" y="3.3" width="13" height="1.6" fill="#5ab0d2"/><rect x="3" y="6.3" width="13" height="1.6" fill="#5ab0d2"/><rect x="3" y="9.3" width="13" height="1.6" fill="#5ab0d2"/></svg>
<div class="btn" style="left:61px;top:985px;width:127px;height:32px;line-height:30px">오더 Excel 변환</div>
<div class="btn" style="left:195px;top:985px;width:127px;height:32px;line-height:30px">Excel 결과 업로드</div>
<div class="btn" style="left:329px;top:985px;width:112px;height:32px;line-height:30px">결과 미리보기</div>
<div class="btn" style="left:448px;top:985px;width:127px;height:32px;line-height:30px">STD 오더 변환(일괄)</div>
</body></html>
